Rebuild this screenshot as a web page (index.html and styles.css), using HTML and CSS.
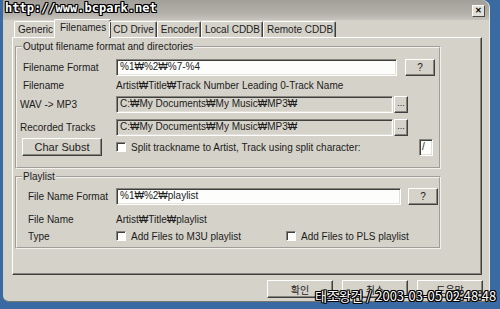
FILE: index.html
```html
<!DOCTYPE html>
<html lang="ko">
<head>
    <meta charset="UTF-8" />
    <title>Options</title>
    <link rel="stylesheet" href="styles.css">
</head>
<body>
    <div class="screen">
        <div class="window">
            <div class="titlebar">
                <span class="close-btn">&#x2715;</span>
            </div>

            <div class="tabs">
                <span class="tab">Generic</span>
                <span class="tab active">Filenames</span>
                <span class="tab">CD Drive</span>
                <span class="tab">Encoder</span>
                <span class="tab">Local CDDB</span>
                <span class="tab">Remote CDDB</span>
            </div>

            <div class="panel">
                <fieldset class="group group-output">
                    <legend>Output filename format and directories</legend>
                    <div class="row row-field">
                        <span class="label label-in">Filename Format</span>
                        <span class="field field-white w-format">%1₩%2₩%7-%4</span>
                        <span class="btn btn-help">?</span>
                    </div>
                    <div class="row row-text">
                        <span class="label label-in">Filename</span>
                        <span class="value">Artist₩Title₩Track Number Leading 0-Track Name</span>
                    </div>
                    <div class="row row-field row-wav">
                        <span class="label">WAV -&gt; MP3</span>
                        <span class="field w-path">C:₩My Documents₩My Music₩MP3₩</span>
                        <span class="btn btn-browse">...</span>
                    </div>
                    <div class="row row-field row-rec">
                        <span class="label">Recorded Tracks</span>
                        <span class="field w-path">C:₩My Documents₩My Music₩MP3₩</span>
                        <span class="btn btn-browse">...</span>
                    </div>
                    <div class="row row-split">
                        <span class="btn btn-subst">Char Subst</span>
                        <span class="check"></span>
                        <span class="value">Split trackname to Artist, Track using split character:</span>
                        <span class="field field-white split-char">/</span>
                    </div>
                </fieldset>

                <fieldset class="group group-playlist">
                    <legend>Playlist</legend>
                    <div class="row row-field">
                        <span class="label label-pl">File Name Format</span>
                        <span class="field field-white w-plformat">%1₩%2₩playlist</span>
                        <span class="btn btn-help btn-help-pl">?</span>
                    </div>
                    <div class="row row-text row-plname">
                        <span class="label label-pl">File Name</span>
                        <span class="value">Artist₩Title₩playlist</span>
                    </div>
                    <div class="row row-type">
                        <span class="label label-pl">Type</span>
                        <span class="check"></span>
                        <span class="value w-m3u">Add Files to M3U playlist</span>
                        <span class="check"></span>
                        <span class="value">Add Files to PLS playlist</span>
                    </div>
                </fieldset>
            </div>

            <div class="buttons">
                <span class="btn btn-dlg">확인</span>
                <span class="btn btn-dlg">취소</span>
                <span class="btn btn-dlg">도움말</span>
            </div>
        </div>

        <div class="stamp stamp-url">http://www.bcpark.net</div>
        <div class="stamp stamp-date">태조왕건 / 2003-03-05 02:48:48</div>
    </div>
</body>
</html>
```

FILE: styles.css
```css
:root {
    --face: #d5d2c9;
    --shadow: #85847e;
    --dark: #3f3f3c;
    --light: #ffffff;
    --desktop: #3a6aa2;
}
* { box-sizing: border-box; }
html, body {
    margin: 0;
}
body {
    width: 500px;
    height: 309px;
    overflow: hidden;
    background-color: var(--desktop);
    font-family: "Liberation Sans", "Noto Sans CJK KR", sans-serif;
    font-size: 10px;
    color: #1c1c1c;
}
.screen {
    position: relative;
    width: 500px;
    height: 309px;
    padding-left: 3px;
}
.window {
    width: 487px;
    height: 302px;
    background-color: var(--face);
    border-radius: 0 8px 0 6px;
    border-right: 1px solid #ecebe6;
    border-bottom: 1px solid #77766f;
    display: flex;
    flex-direction: column;
}

/* title bar */
.titlebar {
    height: 20px;
    background: linear-gradient(#a19f97, #b3b1a9 70%, #c6c4bc);
    border-radius: 0 8px 0 0;
    display: flex;
    justify-content: flex-end;
    align-items: center;
    padding-right: 4px;
}
.close-btn {
    width: 13px;
    height: 12px;
    background-color: #e2e0d8;
    border: 1px solid;
    border-color: #fff #4a4a46 #4a4a46 #fff;
    font-size: 8px;
    font-weight: 700;
    line-height: 10px;
    text-align: center;
    color: #000;
    margin-top: 2px;
}

/* tabs */
.tabs {
    height: 17px;
    display: flex;
    align-items: flex-end;
    padding-left: 11px;
    position: relative;
    z-index: 1;
}
.tab {
    flex: none;
    white-space: nowrap;
    height: 16px;
    line-height: 15px;
    padding: 0 2px 0 3px;
    border-top: 1px solid var(--light);
    border-left: 1px solid var(--light);
    border-right: 1px solid var(--dark);
    box-shadow: inset -1px 0 var(--shadow);
    border-radius: 2px 2px 0 0;
}
.tab.active {
    height: 19px;
    margin: 0 -2px -1px -2px;
    padding: 0 4px 0 5px;
    line-height: 16px;
    background-color: var(--face);
}

/* panel */
.panel {
    width: 470px;
    height: 238px;
    margin-left: 9px;
    border: 1px solid;
    border-color: var(--light) var(--dark) var(--dark) var(--light);
    box-shadow: inset -1px -1px var(--shadow);
    padding: 3px 0 0 2px;
}
.group {
    margin: 0;
    width: 426px;
    border: 2px groove #f2f1ec;
    padding: 0 0 0 3px;
}
.group legend {
    padding: 0 1px;
    margin-left: 2px;
    line-height: 12px;
}
.group-output {
    height: 128px;
    padding-top: 6px;
}
.group-playlist {
    height: 78px;
    margin-top: 2px;
    padding-top: 5px;
}

.row {
    display: flex;
    align-items: center;
}
.row-field { height: 17px; }
.row-text { height: 14px; margin-top: 2px; }
.row-wav { margin-top: 4px; }
.row-rec { margin-top: 6px; }
.row-split { height: 18px; margin-top: 2px; }
.row-plname { margin-top: 7px; }
.row-type { height: 14px; margin-top: 3px; }

.label {
    width: 96px;
    flex: none;
}
.label-in { padding-left: 3px; }
.label-pl { padding-left: 8px; }

.field {
    height: 17px;
    line-height: 14px;
    padding-left: 3px;
    border: 1px solid;
    border-color: var(--shadow) var(--light) var(--light) var(--shadow);
    box-shadow: inset 1px 1px var(--dark), inset -1px -1px #e2e0d8;
    background-color: var(--face);
    white-space: nowrap;
    overflow: hidden;
}
.field-white { background-color: #fdfdfb; }
.w-format { width: 281px; }
.w-path { width: 277px; }
.w-plformat { width: 285px; }
.split-char {
    width: 14px;
    padding-left: 2px;
    margin-left: auto;
    margin-right: 6px;
}

.btn {
    display: flex;
    align-items: center;
    justify-content: center;
    border: 1px solid;
    border-color: var(--light) var(--dark) var(--dark) var(--light);
    box-shadow: inset -1px -1px var(--shadow);
    background-color: var(--face);
}
.btn-help {
    width: 30px;
    height: 17px;
    margin-left: 8px;
}
.btn-help-pl { margin-left: 7px; }
.btn-browse {
    width: 14px;
    height: 17px;
    margin-left: 1px;
    padding-bottom: 3px;
    font-size: 9px;
}
.btn-subst {
    width: 80px;
    height: 18px;
    margin-left: 2px;
    margin-right: 14px;
    font-size: 11px;
}

.check {
    width: 10px;
    height: 10px;
    flex: none;
    background-color: #fdfdfb;
    border: 1px solid;
    border-color: var(--shadow) var(--light) var(--light) var(--shadow);
    box-shadow: inset 1px 1px var(--dark);
    margin-right: 5px;
}
.w-m3u { width: 155px; }

/* dialog buttons */
.buttons {
    display: flex;
    justify-content: flex-end;
    gap: 9px;
    margin-top: 5px;
    padding-right: 6px;
}
.btn-dlg {
    width: 66px;
    height: 18px;
    font-family: "Noto Sans CJK KR", sans-serif;
    font-size: 10px;
}

/* scanner watermarks over the capture */
.stamp {
    position: absolute;
    color: #fff;
    white-space: nowrap;
    text-shadow: 1px 0 #000, -1px 0 #000, 0 1px #000, 0 -1px #000,
                 1px 1px #000, -1px -1px #000, 1px -1px #000, -1px 1px #000;
}
.stamp-url {
    left: 5px;
    top: 1px;
    font-family: "DejaVu Sans Mono", monospace;
    font-weight: 700;
    font-size: 12px;
    line-height: 15px;
}
.stamp-date {
    left: 315px;
    top: 288px;
    font-family: "Noto Sans CJK KR", sans-serif;
    font-size: 13px;
    letter-spacing: 0;
    line-height: 16px;
}
```
